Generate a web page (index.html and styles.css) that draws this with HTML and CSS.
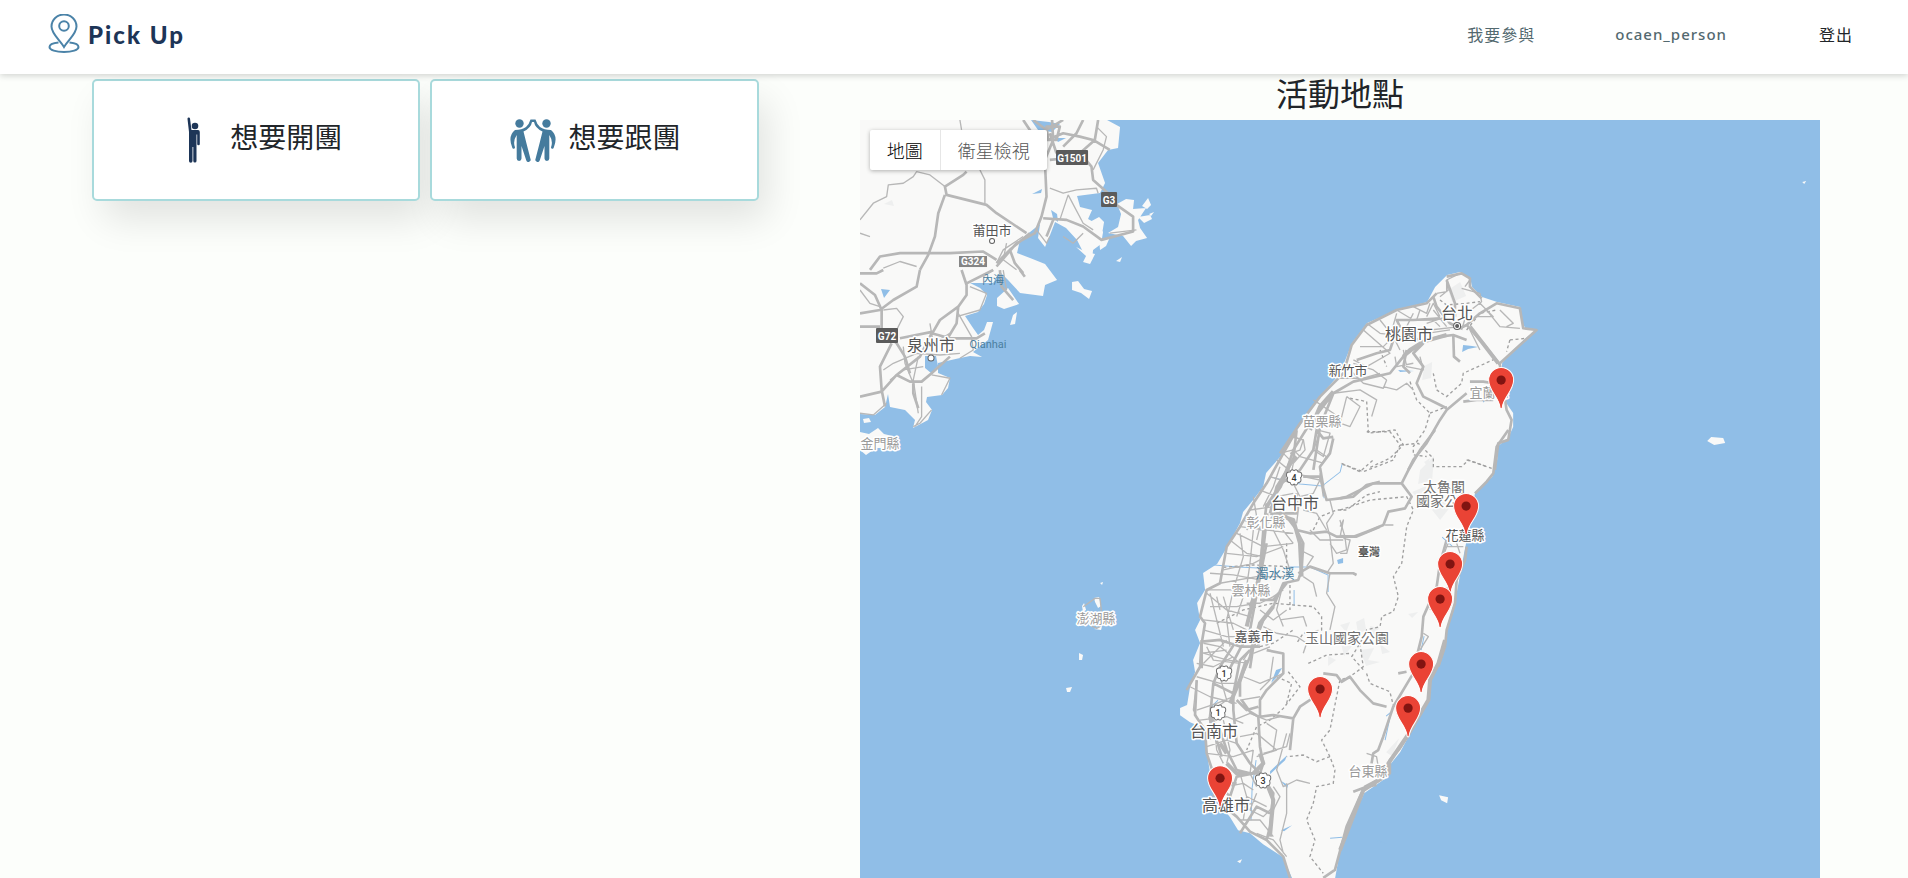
FILE: index.html
```html
<!DOCTYPE html>
<html lang="zh-Hant">
<head>
<meta charset="utf-8">
<meta name="viewport" content="width=device-width, initial-scale=1">
<title>Pick Up</title>
<link rel="stylesheet" href="styles.css">
</head>
<body>
<header class="navbar">
  <a class="brand" href="#">
    <svg class="brand-icon" viewBox="0 0 32 40" aria-hidden="true">
      <path d="M16 33C12 26 3.500 20 3.500 12.500a12.500 12 0 0 1 25 0C28.500 20 20 26 16 33Z"/>
      <circle cx="16" cy="12" r="4.800"/>
      <path d="M10.500 28.500C5 29 1.500 30.800 1.500 33c0 3 6.500 5 14.500 5s14.500-2 14.500-5c0-2.200-3.500-4-9-4.500"/>
    </svg>
    <span class="brand-name">Pick Up</span>
  </a>
  <nav class="nav-links">
    <a href="#">我要參與</a>
    <a class="user" href="#">ocaen_person</a>
    <a class="logout" href="#">登出</a>
  </nav>
</header>
<main class="page">
  <section class="actions">
    <a class="card" href="#">
      <svg class="card-icon solo" viewBox="0 0 48 48" aria-hidden="true">
        <circle cx="25" cy="10" r="3.300"/>
        <path d="M17.500 3a1.200 1.200 0 0 1 2.500-.5L21.500 14h6.500a2 2 0 0 1 1.800 2v12a1.200 1.200 0 0 1-2.600 0V18.500h-.7V45a1.600 1.600 0 0 1-3.200 0V31h-.8v14a1.700 1.700 0 0 1-3.500 0V16Z"/>
      </svg>
      <h3>想要開團</h3>
    </a>
    <a class="card" href="#">
      <svg class="card-icon pair" viewBox="0 0 48 48" aria-hidden="true">
        <g id="dancer"><circle cx="10.500" cy="7.500" r="4.200"/>
        <path d="M6 14q7-.2 11-3 3-2.500 4.500-7.500H24v2.500h-1q-1 6-8.500 9.500l3 12 4 15.500a2.200 2.200 0 0 1-4.200 1.500L12.500 30V42.500a2.300 2.300 0 0 1-4.800 0V19q-4 6-1.800 12a1.200 1.200 0 0 1-2.600.8Q-1.500 20 6 14Z"/></g>
        <use href="#dancer" transform="translate(48 0) scale(-1 1)"/>
      </svg>
      <h3>想要跟團</h3>
    </a>
  </section>
  <section class="places">
    <h2>活動地點</h2>
    <div class="map">
      <svg class="map-canvas" viewBox="860 120 960 758" preserveAspectRatio="xMinYMin slice" role="img" aria-label="活動地點地圖">
        <defs>
          <g id="pin"><path class="pin-body" d="M-1 0C-2-11-12.500-17-12.500-28a12.500 12.500 0 0 1 25 0C12.500-17 2-11 1 0Q0 1.500-1 0Z"/><circle class="pin-dot" cy="-28" r="4.600"/></g>
          <path id="flower" class="shield" d="M0-7.500q3-2 4 1.500 4.500-.5 3.500 4-.2 1-1 1.500 1.500 5-2.500 5-1.500 4-4 1.500-2.500 2.500-4-1.500-4 0-2.500-5-.8-.5-1-1.500-1-4.500 3.500-4 1-3.500 4-1.500Z"/>
        </defs>
        <!-- land -->
        <g class="land">
          <path d="M860 120H1107L1120 127 1118 148 1108 150 1098 163 1105 183 1100 193 1077 196 1080 207 1092 210 1088 219 1097 224 1103 232 1101 244 1093 250 1092 260 1083 252 1077 240 1066 228 1055 222 1050 235 1045 247 1038 238 1040 224 1030 232 1020 240 1017 253 1030 258 1045 264 1057 280 1045 285 1043 296 1020 293 1008 280 1000 272 993 283 970 283 980 288 987 295 984 304 978 312 965 316 973 328 978 335 984 330 987 322 993 322 988 340 973 352 982 357 970 356 960 358 938 363 938 373 950 378 948 388 942 395 927 397 926 402 932 410 928 420 913 428 915 420 905 410 890 407 888 394 885 407 875 415 860 414Z"/>
          <path d="M1117 204 1126 199 1134 200 1133 209 1146 208 1138 220 1140 228 1147 238 1136 241 1131 246 1123 236 1108 233 1118 227 1121 214ZM1142 206 1148 198 1151 205 1147 209ZM1138 217 1150 215 1152 219 1144 223ZM1086 224 1099 217 1104 222 1101 240 1090 238ZM1149 214 1154 212 1151 216ZM1116 261 1122 257 1120 262ZM1099 240 1110 237 1106 246 1100 250ZM1076 247 1086 252 1095 254 1090 264 1083 262 1086 256ZM1072 282 1078 281 1084 289 1092 291 1089 299 1081 293 1072 290ZM997 298 1008 288 1019 304 1004 309 997 306ZM1013 315 1017 312 1015 324 1010 325ZM860 432 869 434 878 428 884 434 892 436 896 448 876 448 866 455 860 450ZM863 419 869 418 871 422 864 423Z"/>
          <path d="M1460 272 1470 278 1472 287 1482 297 1497 302 1520 307 1522 322 1525 328 1537 330 1527 337 1513 350 1502 363 1501 380 1504 400 1513 413 1513 427 1508 438 1498 446 1497 460 1492 477 1475 492 1469 528 1464 553 1456 596 1447 626 1445 640 1440 663 1430 683 1428 703 1415 724 1400 752 1388 767 1387 777 1364 793 1355 813 1340 850 1335 878 1292 878 1283 857 1263 844 1250 833 1238 830 1230 817 1222 807 1210 773 1205 740 1202 727 1190 722 1180 715 1180 708 1187 705 1190 687 1195 672 1193 660 1200 643 1195 630 1200 620 1197 603 1205 590 1203 573 1217 564 1227 547 1240 523 1243 512 1253 500 1263 487 1266 473 1280 457 1297 430 1320 397 1340 373 1352 343 1367 323 1397 310 1427 302 1435 287 1447 275Z"/>
          <path d="M1082 606 1084 603 1086 610 1083 612ZM1094 598 1099 597 1101 606 1098 608 1095 602ZM1094 629 1102 626 1101 630ZM1100 583 1103 582 1102 585ZM1079 653 1083 655 1082 660 1079 660ZM1066 688 1072 687 1070 692 1067 692ZM1707 441 1711 437 1723 438 1725 443 1714 445ZM1439 795 1448 797 1447 803 1441 800ZM1237 861 1242 859 1240 863ZM1802 182 1806 181 1804 184Z"/>
        </g>
        <!-- relief -->
        <g class="relief"><path d="M1420 470 1434 456 1432 480 1418 484ZM1432 510 1442 498 1450 507 1440 520ZM1412 492 1426 486 1424 506ZM1340 625 1350 622 1346 632ZM1356 622 1364 618 1366 630 1358 634ZM1370 626 1379 628 1372 640ZM1340 640 1352 646 1344 656ZM1360 650 1374 648 1368 660 1380 662 1366 666ZM1328 656 1336 660 1328 666ZM1380 644 1390 652 1382 654ZM1386 752 1399 738 1392 756ZM1448 290 1460 282 1466 296 1452 302ZM1424 366 1432 362 1431 378 1422 380ZM1424 462 1430 458 1427 466ZM1408 614 1418 612 1412 618ZM884 204 892 200 894 206Z"/></g>
        <!-- water -->
        <g class="water">
          <path d="M1463 345 1472 346 1478 347 1468 349 1462 352ZM1398 370 1414 371 1400 372ZM881 289 890 290 884 298ZM1032 194 1042 189 1041 193ZM1051 210 1057 214 1058 222 1053 218ZM1276 670 1282 668 1276 678 1271 683ZM1270 771 1287 755 1285 760 1270 774ZM1280 780 1288 785 1287 788ZM1281 830 1292 825 1284 831ZM1337 560 1343 558 1343 563 1338 564ZM925 356 936 356 938 366 931 373 925 368ZM1031 120 1049 122 1060 124 1052 132 1038 130ZM1054 138 1066 138 1058 142Z"/>
          <path class="stream" d="M1274 478 1300 484 1322 486 1340 472 1342 464M1214 565 1238 567 1258 568M1290 567 1310 567 1328 575 1328 592M1256 760 1252 788 1251 820M1386 716 1391 712 1385 740M1442 537 1452 546M1421 650 1424 636M1294 590 1294 606M1483 402 1488 396M1387 844 1376 840M1330 838 1342 837M1218 700 1210 708M1322 483 1324 498"/>
        </g>
        <!-- provincial borders -->
        <g class="border">
          <path transform="translate(1280 250) scale(.333)" d="M210 445 260 455 265 550 345 540 370 585 330 625 265 655M390 395 410 450 450 490 435 540 400 590 400 615 440 620M450 490 500 470M460 370 470 420 500 440 545 400 550 370 650 325M480 150 500 165 560 160 600 155M560 240 600 190 650 180M690 270 740 265M690 270 680 305M560 630 620 650M300 300 320 350"/>
          <path transform="translate(1160 430) scale(.333)" d="M545 100 600 125 640 90M460 300 480 260 530 240 560 240 620 195 660 185M190 412 280 405 380 410M380 340 380 430M170 580 250 540 340 520 460 530 485 560 485 600 430 610 410 640M300 650 340 640 400 600M390 465 390 540"/>
          <path transform="translate(1340 430) scale(.333)" d="M80 5 150 5 180 45 160 90 70 125 0 100M180 45 235 40 280 85 280 110 365 110 385 90 455 115M0 240 90 210 200 200 220 240 200 290 185 400 160 440 175 500 160 545 125 560 120 590 80 600 60 640 35 680 70 720"/>
          <path transform="translate(1160 640) scale(.333)" d="M600 10 610 80 570 110 540 120 510 270 485 300 510 350 525 390 520 430 470 440 460 490 440 540 465 600 450 650 490 700M620 100 630 130 690 155 700 195M510 350 470 365 430 345 380 350M385 95 420 140 370 205 330 240 290 260 260 330M350 110 395 130 380 190M445 70 500 45 570 40"/>
        </g>
        <!-- mainland roads -->
        <g class="thin">
          <path transform="translate(850 70) scale(.333)" d="M30 450 70 400 110 380 115 345 160 340 190 320 200 305 240 315 285 350M390 300 405 330 405 400M330 150 335 180M600 355 640 370 680 360 740 355 745 370M655 375 630 450M655 375 700 460 730 480M640 500 670 520 700 490M740 170 770 200 760 240 730 300M30 490 60 500M440 580 460 540 520 500M100 595 150 575 200 590M470 520 460 570 500 600M560 480 590 520 600 500M780 490 860 480"/>
          <path transform="translate(850 270) scale(.333)" d="M100 120 140 115 160 140 140 180M30 60 60 100 90 110M325 130 365 200 370 240 330 265M100 300 130 280 200 250 270 255 330 250M160 230 165 280 190 340M205 260 190 330 205 430M215 350 215 440 195 470M245 315 300 325 275 375M120 330 160 300 220 290M30 430 70 435 110 400M460 0 470 60M430 0 400 20M360 50 410 70 390 120 320 140M240 160 250 220 300 190M190 470 210 460 245 420"/>
        </g>
        <g class="road">
          <path transform="translate(850 70) scale(.333)" d="M350 305 340 315 285 350 290 375 410 405 440 430 530 490M285 375 265 430 255 500 235 555 210 600M605 120 610 210 585 270 590 380 575 440 555 490 500 520 440 590M520 150 560 210 590 210 640 190 690 200 730 210 780 240M745 150 735 210 690 250 650 265 600 270M60 600 90 560 150 550 230 550 300 550 400 545 440 570M580 445 650 450 700 470 755 510 850 485 850 440 800 405 775 370 730 330 725 290 700 260M590 500 610 450M550 150 590 180 640 150M700 150 680 190 640 230M600 190 620 250M590 170 630 170 620 210 595 210ZM440 580 480 540 540 490M480 540 495 580 520 610"/>
          <path transform="translate(850 270) scale(.333)" d="M30 40 75 75 95 120 95 180 140 220 165 260 180 310M30 170 90 170M30 130 90 120 130 90 200 50 210 0M335 0 350 45 350 75 325 110 270 150 250 185 150 205M350 40 430 0M450 0 455 50 490 90M325 110 320 160 290 210M125 220 90 290 95 360 105 410M30 380 95 365 140 315 210 260 245 190 300 205 380 205 405 190M140 315 180 335 215 335 245 310 300 260M190 340 190 370 205 415M510 0 525 20M30 10 80 10 100 0"/>
        </g>
        <!-- island minor roads -->
        <g class="thin">
          <path transform="translate(1280 250) scale(.333)" d="M470 130 500 125 500 90 540 70M500 90 505 120 480 140M555 110 570 90M545 115 600 130 605 155 560 190 545 240M260 220 300 250 380 260M250 240 330 310 260 350 220 330M240 290 310 290 340 260M350 180 400 210 460 210 480 230M350 190 330 260M400 170 440 190 450 160M440 200 460 160 480 200M370 240 440 250 510 240M300 210 340 260 360 300M220 340 280 360 320 390M320 390 310 415 250 400 210 360M370 300 380 350 430 360 420 320M345 320 350 350 400 340M180 385 250 385 300 370M160 430 240 420 290 450 275 500M310 410 350 420 380 400 400 420M200 440 240 470 210 530 180 520 200 440M100 450 160 490 180 510M70 500 110 540 150 550 130 620 100 600 120 550M30 560 70 570 75 600 40 640M0 610 40 600 60 620 130 640M620 180 660 230 720 235M660 180 700 220 680 230M570 240 600 300M400 190 380 230M420 180 410 210M460 180 500 230M440 220 500 200M450 240 540 230M600 160 640 200 590 200"/>
          <path transform="translate(1160 430) scale(.333)" d="M350 90 400 130 450 140M330 140 400 160 420 200M300 180 350 200 400 190M270 240 340 230 370 250M240 290 320 300 400 310M230 310 310 350 400 340M210 330 260 370 310 380M200 370 290 380 370 350M190 420 280 400 300 390M180 460 290 440 370 440M150 430 220 435 300 450M140 480 240 480 300 490M140 490 200 540 270 560M150 530 230 530 290 520M130 570 220 580 260 600M130 600 200 620 280 620M130 640 180 650 240 700M130 670 200 690 260 700M240 310 250 380 220 480 200 570 210 650M280 300 270 400 260 470 230 560M340 300 370 360 390 420M360 290 400 340M430 140 480 150 460 190 420 200 410 280M480 130 490 200M510 210 520 250 500 280 510 320 520 400 500 430M540 270 555 320 560 360 530 370 510 340M430 240 470 250 500 300M420 360 460 380 440 410M430 440 460 460 470 500M510 430 500 490 525 530 510 600M370 460 350 540 370 590M300 540 340 570 380 540M260 520 300 520 340 500 370 480M370 70 400 100 390 150M400 20 430 30 420 60 390 70M360 110 340 170 310 230M470 60 500 80 480 110M450 300 480 330 550 330M190 500 220 600M150 490 170 570 190 650M310 590 350 610 410 620M360 570 430 560 440 590M410 620 440 640 430 670M250 270 300 290 290 330M170 500 180 540M280 200 290 260 260 300"/>
          <path transform="translate(1160 640) scale(.333)" d="M110 70 160 80 220 50M110 110 180 130 240 130M90 140 150 170 230 190M110 210 170 190 220 170M120 240 200 230 250 250M140 320 200 300 230 310M140 340 220 350 280 330M150 300 150 230 180 200M160 230 170 330 190 370M190 240 210 330 200 370M250 110 300 130 370 100 370 60M240 180 300 170M220 240 270 220 320 240 360 230M240 290 290 280 350 330 290 350M310 340 380 320 390 280M280 330 270 400 290 440M320 250 350 270 340 330M380 280 350 390 370 440 410 420 450 430M380 430 380 520 360 600 370 640M340 440 360 470 340 510M290 460 270 510 310 530 340 500M240 400 260 470 250 540M260 470 320 500M280 380 300 400M200 440 250 430 280 450M220 500 280 490M240 540 300 540 340 590M290 580 340 600 380 650M140 20 160 60 240 70M120 40 200 30M130 70 200 0M280 40 330 20M340 50 330 120 300 150M620 340 650 350 655 380M250 60 270 30 300 10M110 120 100 210 110 230M180 110 200 180 160 210"/>
          <path transform="translate(1340 430) scale(.333)" d="M320 350 340 310 360 370M300 420 310 380 320 350 370 350M270 540 290 490 330 470M250 610 265 620 240 660M0 290 10 270 0 320M10 325 30 330 20 370 0 370M135 285 160 285"/>
          <path transform="translate(1040 560) scale(.333)" d="M130 140 165 115 180 115 185 160M150 195 170 205 180 200"/>
        </g>
        <!-- island main roads -->
        <g class="road">
          <path transform="translate(1280 250) scale(.333)" d="M500 80 545 70 570 85 570 110 605 145M470 130 440 160 350 180 260 225 215 285 190 370 120 440 60 520 0 610M460 140 470 170 510 220 540 235 560 225 600 190 650 160 720 175 730 235 770 240 660 340M500 90 525 160 525 200M520 255 522 320 540 335M560 225 610 280 660 345 680 480 695 510 685 570 655 580 645 660M430 275 480 260 520 255 560 270M430 275 370 320 330 370 220 395 160 430 120 530 100 660M430 275 370 250 350 210 400 210 480 205M160 430 90 520 40 600 20 660M230 330 290 310 330 300 340 270M570 395 610 395 640 400M560 430 500 480 480 510 440 580 400 630 385 660M430 280 400 310 430 350 410 400 430 440 470 460 500 475M550 455 590 450 640 450M380 300 370 350 390 370"/>
          <path transform="translate(1160 430) scale(.333)" d="M410 0 370 70 320 160 280 220 240 290 200 350 180 460 140 480 120 560 135 580 125 640 125 715M470 0 460 60 420 120 350 170 330 250M410 0 400 90 350 170M320 220 310 300 300 440 270 600 210 715M330 250 380 260 410 300 430 340 425 420 415 450 370 460 340 530 310 570 280 650 270 715M410 300 450 310 500 305 530 320 590 320 660 290M430 140 480 140 500 210 540 205 580 200 620 165 660 155M520 25 510 70 480 110 490 170M415 430 450 410 510 430 580 430 590 435M300 300 350 250 410 250 410 190M300 510 340 510 380 460M125 635 180 630 240 650 300 650M520 20 490 25 470 0M320 340 300 440 270 530"/>
          <path transform="translate(1340 430) scale(.333)" d="M285 0 240 60 205 120 185 160 100 160 20 200 0 205M185 160 215 200 195 235 145 245 130 285 80 305 40 320 0 318M505 0 470 50 460 130 440 155 405 190M380 350 375 390 350 450 345 520 320 600 315 650 295 710M320 330 300 400 290 470 250 560 245 620 225 700"/>
          <path transform="translate(1160 640) scale(.333)" d="M125 0 120 80 80 150M110 120 105 225 135 270 140 340 170 430M230 0 180 80 160 130 220 160 240 60 270 30M160 130 150 230 180 270 200 330 230 390M220 160 220 210 230 310 270 370 300 400M245 180 270 215 295 230 300 320 310 370 300 400M240 170 240 120 270 50 280 0M300 230 300 180 320 150 370 100 370 40 320 30M300 230 340 225 400 235 420 200 480 160M400 235 390 330M230 390 270 400 300 400 340 460 330 560 320 600M170 430 210 470 230 410 280 400M180 490 230 530 270 575 320 600 370 650 390 714M490 100 530 105 545 125 570 110 600 150 640 190 680 200M715 100 740 95M760 100 700 200 670 290 655 330 640 340 635 370M765 255 720 325 690 360 690 400 615 440 600 470 560 560 525 690 490 714M580 455 620 440 650 435M330 520 290 500 240 580M185 350 170 300M230 430 180 430 160 470M295 200 260 210 230 180"/>
        </g>
        <g class="highway">
          <path transform="translate(1160 430) scale(.333)" d="M410 80 390 100 360 170 320 230M320 250 310 340 300 430 260 590M340 250 400 270 420 340 425 440M280 650 300 580 340 530"/>
          <path transform="translate(1160 640) scale(.333)" d="M150 230 160 270M210 190 240 120 260 60M300 340 310 370 280 400M320 430 340 480 330 590M180 310 200 340M200 370 230 400 260 400"/>
          <path transform="translate(1280 250) scale(.333)" d="M570 230 655 340M370 320 390 300 430 275 500 255M160 425 120 470 90 540"/>
          <path transform="translate(1340 640) scale(.333)" d="M315 0 295 70 270 120 265 180 200 290 145 370 140 405 70 450 0 630"/>
        </g>
        <!-- route badges -->
        <g class="badge"><rect x="1056" y="150" width="32" height="15" rx="1"/><text x="1072" y="162">G1501</text><rect x="1101" y="192" width="16" height="15" rx="1"/><text x="1109" y="204">G3</text><rect class="lighter" x="959" y="256" width="28" height="11"/><text x="973" y="265">G324</text><rect x="876" y="328" width="22" height="15" rx="1"/><text x="887" y="340">G72</text></g>
        <g class="route"><use href="#flower" x="1294" y="478"/><text x="1294" y="481">4</text><use href="#flower" x="1224" y="674"/><text x="1224" y="677">1</text><use href="#flower" x="1218" y="713"/><text x="1218" y="716">1</text><use href="#flower" x="1263" y="781"/><text x="1263" y="784">3</text></g>
        <g class="town"><circle cx="992" cy="241" r="2.500"/><circle cx="931" cy="358" r="3"/><circle cx="1457" cy="326" r="3.500"/><circle class="core" cx="1457" cy="326" r="1.500"/></g>
        <!-- place names -->
        <g class="label city"><text x="931" y="351">泉州市</text><text x="1457" y="319">台北</text><text x="1409" y="340">桃園市</text><text x="1295" y="509">台中市</text><text x="1214" y="737">台南市</text><text x="1226" y="811">高雄市</text></g>
        <g class="label county"><text x="992" y="235">莆田市</text><text x="1348" y="375">新竹市</text><text x="1254" y="641">嘉義市</text><text x="1465" y="540">花蓮縣</text></g>
        <g class="label park"><text x="1444" y="492">太魯閣</text><text x="1444" y="506">國家公園</text><text x="1347" y="643">玉山國家公園</text></g>
        <g class="label faint"><text x="1322" y="426">苗栗縣</text><text x="1489" y="397">宜蘭縣</text><text x="1266" y="527">彰化縣</text><text x="1251" y="595">雲林縣</text><text x="1368" y="776">台東縣</text><text x="1096" y="623">澎湖縣</text><text x="880" y="448">金門縣</text></g>
        <g class="label country"><text x="1369" y="556">臺灣</text></g>
        <g class="label sea"><text x="993" y="284">內海</text><text x="988" y="348">Qianhai</text></g>
        <g class="label river"><text x="1275" y="578">濁水溪</text></g>
        <!-- event pins -->
        <g><use href="#pin" x="1501" y="408"/><use href="#pin" x="1466" y="534"/><use href="#pin" x="1450" y="592"/><use href="#pin" x="1440" y="627"/><use href="#pin" x="1421" y="692"/><use href="#pin" x="1408" y="736"/><use href="#pin" x="1320" y="717"/><use href="#pin" x="1220" y="806"/></g>
      </svg>
      <div class="map-types"><button type="button" class="active">地圖</button><button type="button">衛星檢視</button></div>
    </div>
  </section>
</main>
</body>
</html>
```
FILE: styles.css
```css
* { box-sizing: border-box; }
html, body { height: 100%; }
body {
  margin: 0;
  display: flex;
  flex-direction: column;
  overflow: hidden;
  background: #fcfefb;
  color: #212529;
  font-family: "Noto Sans", "Noto Sans CJK TC", sans-serif;
}
a { color: inherit; text-decoration: none; }
h2, h3 { margin: 0; font-weight: 400; line-height: 1.2; }
.navbar {
  position: relative;
  z-index: 1;
  flex: none;
  display: flex;
  align-items: center;
  justify-content: space-between;
  height: 74px;
  padding: 0 55px 6px 48px;
  background: #fff;
  box-shadow: 0 2px 6px rgba(0, 0, 0, .16);
}
.brand { display: flex; align-items: center; gap: 8px; }
.brand-icon { width: 32px; height: 40px; fill: none; stroke: #4b83a8; stroke-width: 2; }
.brand-name {
  color: #1d3557;
  font-family: Lato, sans-serif;
  font-size: 24px;
  font-weight: 900;
  letter-spacing: 2px;
}
.nav-links {
  display: flex;
  align-items: center;
  gap: 80px;
  color: #53696f;
  font-size: 16px;
  letter-spacing: 1px;
}
.nav-links .user { font-size: 15px; font-weight: 500; }
.nav-links .logout { margin-left: 12px; color: #212529; }
.page {
  flex: 1;
  min-height: 0;
  display: grid;
  grid-template-columns: 25fr 36fr;
  gap: 101px;
  padding: 0 88px 0 92px;
}
.actions {
  position: relative;
  z-index: 0;
  display: flex;
  align-items: flex-start;
  gap: 10px;
  padding-top: 5px;
}
.card {
  position: relative;
  flex: 1;
  display: flex;
  align-items: center;
  justify-content: center;
  gap: 12px;
  height: 122px;
  background: #fff;
  border: 2px solid #a8dadc;
  border-radius: 5px;
}
.card::before {
  content: "";
  position: absolute;
  inset: 0;
  z-index: -1;
  box-shadow: 10px 20px 36px rgba(0, 0, 0, .11);
}
.card h3 { font-size: 28px; padding-bottom: 4px; }
.card-icon { width: 48px; height: 48px; }
.solo { fill: #1d3557; }
.pair { fill: #457b9d; }
.places { display: flex; flex-direction: column; min-width: 0; min-height: 0; }
.places h2 { font-size: 32px; line-height: 40px; text-align: center; padding-bottom: 6px; }
.map { position: relative; flex: 1; min-height: 0; overflow: hidden; background: #90bee7; }
.map-canvas { display: block; width: 100%; height: 100%; }
.map-types {
  position: absolute;
  top: 10px;
  left: 10px;
  display: flex;
  height: 40px;
  background: #fff;
  border-radius: 2px;
  box-shadow: 0 1px 4px rgba(0, 0, 0, .3);
}
.map-types button {
  padding: 0 17px;
  border: 0;
  background: none;
  color: #565656;
  font: 300 18px Roboto, "Noto Sans CJK TC", sans-serif;
}
.map-types button + button { border-left: 1px solid #e6e6e6; }
.map-types .active { color: #000; }
.land { fill: #f9f9f8; }
.relief { fill: #eeefef; }
.water { fill: #90bee7; }
.stream { fill: none; stroke: #90bee7; stroke-width: 1; }
.border { fill: none; stroke: #a0a0a0; stroke-width: 4; stroke-dasharray: 9 8; }
.thin, .road, .highway { fill: none; stroke: #b7b7b7; stroke-linejoin: round; }
.thin { stroke-width: 4; }
.road { stroke-width: 8; }
.highway { stroke-width: 12; }
.badge rect { fill: #5b5b5b; }
.badge .lighter { fill: #858585; }
.badge text { fill: #fff; font: 700 10px Roboto, sans-serif; text-anchor: middle; }
.shield { fill: #fff; stroke: #707070; stroke-width: 1; }
.route text { fill: #333; font: 500 9px Roboto, sans-serif; text-anchor: middle; }
.town { fill: #fff; stroke: #606060; stroke-width: 1; }
.core { fill: #606060; }
.label {
  text-anchor: middle;
  font-family: Roboto, "Noto Sans CJK TC", sans-serif;
  fill: #555;
  stroke: #fff;
  stroke-width: 3;
  stroke-linejoin: round;
  paint-order: stroke;
}
.city { font-size: 16px; }
.county, .faint { font-size: 13px; }
.park { font-size: 14px; fill: #707070; }
.faint { fill: #9a9a9a; }
.country { font-size: 11px; font-weight: 700; }
.sea { font-size: 11px; fill: #4b7f9f; stroke: none; }
.river { font-size: 13px; fill: #4b7f9f; stroke: none; }
.pin-body { fill: #ea4335; stroke: #fff; stroke-width: 1; }
.pin-dot { fill: #811411; }
```
